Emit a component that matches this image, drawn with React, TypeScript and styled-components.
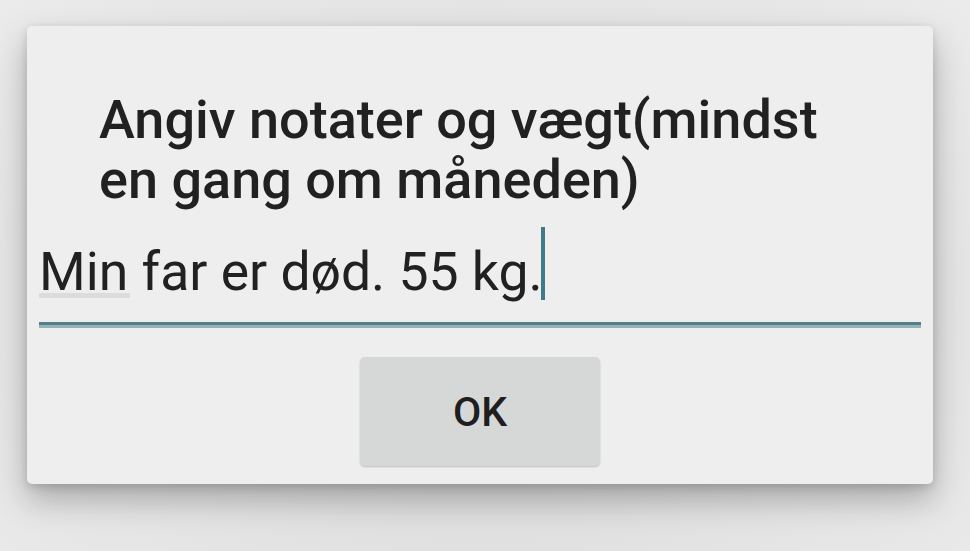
import React from "react";
import styled, { createGlobalStyle } from "styled-components";

const Global = createGlobalStyle`
  html, body { margin: 0; padding: 0; }
  body {
    background: #e9e9e9;
    font-family: Roboto, "Noto Sans", "Liberation Sans", sans-serif;
  }
`;

const Stage = styled.div`
  width: 970px;
  height: 551px;
  box-sizing: border-box;
  padding: 26px 37px 67px 27px;
  background: radial-gradient(ellipse at 50% 55%, #cfcfcf 0%, #e2e2e2 60%, #ebebeb 100%);
  overflow: hidden;
`;

const Dialog = styled.div`
  width: 906px;
  height: 458px;
  box-sizing: border-box;
  background: #eeeeee;
  border-radius: 5px;
  box-shadow: 0 16px 32px rgba(0, 0, 0, 0.26), 0 3px 10px rgba(0, 0, 0, 0.14);
  display: flex;
  flex-direction: column;
  padding: 63.5px 12px 0 12px;
`;

const Title = styled.h1`
  margin: 0 0 0 60px;
  font-size: 54px;
  font-weight: 500;
  line-height: 60px;
  color: #212121;
  width: 760px;
`;

const Field = styled.div`
  margin-top: 15.5px;
  height: 100px;
  box-sizing: border-box;
  border-bottom: 3px solid #587f86;
  box-shadow: 0 3px 0 #94b2b7;
  display: flex;
  align-items: flex-start;
  padding-top: 17px;
  font-size: 53.5px;
  line-height: 60px;
  color: #212121;
`;

const Word = styled.span`
  position: relative;
  &::after {
    content: "";
    position: absolute;
    left: 0;
    right: -2px;
    top: 51px;
    height: 5px;
    background: #dcdcdc;
  }
`;

const Cursor = styled.span`
  display: inline-block;
  width: 4px;
  height: 73px;
  margin-top: -15px;
  margin-left: -2px;
  background: #3f7a88;
`;

const Actions = styled.div`
  display: flex;
  justify-content: center;
  padding-top: 32px;
`;

const Button = styled.button`
  width: 240px;
  height: 109px;
  border: none;
  border-radius: 5px;
  background: #d6d7d7;
  box-shadow: 0 1px 2px rgba(0, 0, 0, 0.2);
  font-family: Roboto, "Noto Sans", "Liberation Sans", sans-serif;
  font-size: 41px;
  font-weight: 500;
  color: #1e1e1e;
  padding: 0;
`;

export default function App() {
  return (
    <>
      <Global />
      <Stage>
        <Dialog>
          <Title>Angiv notater og vægt(mindst en gang om måneden)</Title>
          <Field>
            <Word>Min</Word>
            <span>&nbsp;far er død. 55 kg.</span>
            <Cursor />
          </Field>
          <Actions>
            <Button>OK</Button>
          </Actions>
        </Dialog>
      </Stage>
    </>
  );
}
